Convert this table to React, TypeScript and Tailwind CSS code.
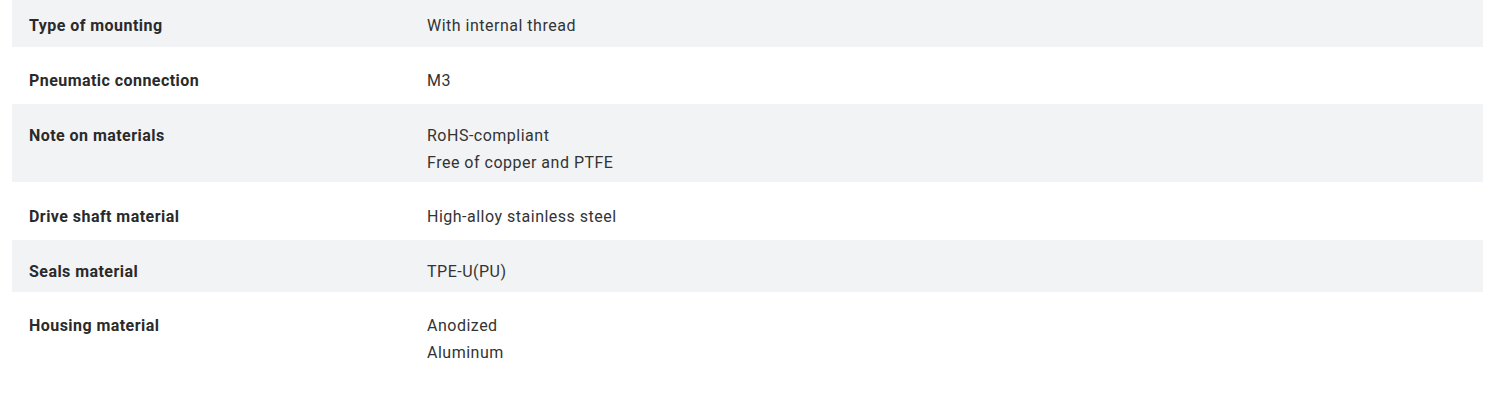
const rows: { label: string; value: string[]; cls: string }[] = [
  { label: 'Type of mounting', value: ['With internal thread'], cls: 'h-[47px] pt-[12px] bg-[#f2f3f5]' },
  { label: 'Pneumatic connection', value: ['M3'], cls: 'h-[57px] pt-[20px]' },
  { label: 'Note on materials', value: ['RoHS-compliant', 'Free of copper and PTFE'], cls: 'h-[78px] pt-[18px] bg-[#f2f3f5]' },
  { label: 'Drive shaft material', value: ['High-alloy stainless steel'], cls: 'h-[58px] pt-[21px]' },
  { label: 'Seals material', value: ['TPE-U(PU)'], cls: 'h-[52px] pt-[18px] bg-[#f2f3f5]' },
  { label: 'Housing material', value: ['Anodized', 'Aluminum'], cls: 'h-[80px] pt-[20px]' },
]

export default function App() {
  return (
    <div
      className="w-[1500px] h-[403px] bg-white pl-[12px] pr-[17px] text-[16px] leading-[27px] tracking-[0.5px] text-[#333]"
      style={{ fontFamily: 'Roboto, "Liberation Sans", sans-serif' }}
    >
      {rows.map(r => (
        <div key={r.label} className={`flex ${r.cls}`}>
          <div className="w-[415px] pl-[17px] font-bold tracking-[0.45px] text-[#2a2a2a]">{r.label}</div>
          <div className="flex-1">
            {r.value.map(v => (
              <div key={v}>{v}</div>
            ))}
          </div>
        </div>
      ))}
    </div>
  )
}
